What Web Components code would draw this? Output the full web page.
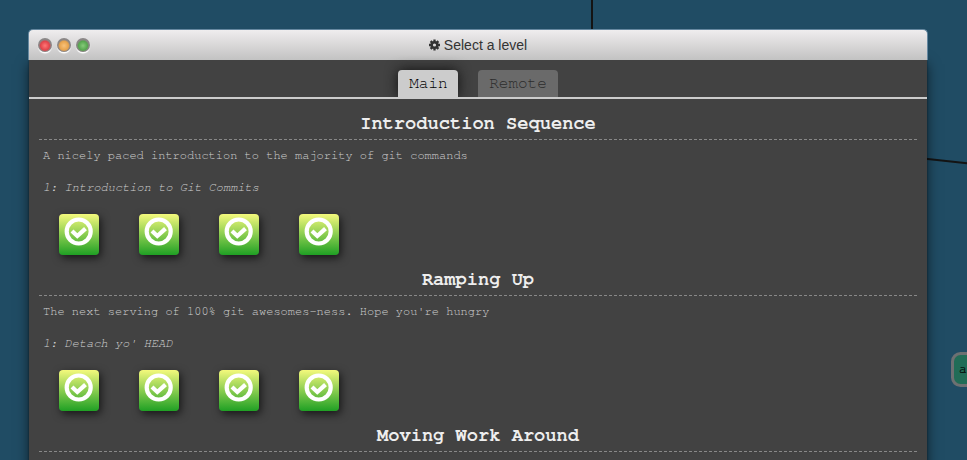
<!DOCTYPE html>
<html lang="en"><head><meta charset="utf-8"><title>Select a level</title>
<style>html,body{margin:0;height:100%;overflow:hidden;background:#204c64}html{--mono:"TeX Gyre Cursor","Liberation Mono",monospace}</style></head><body>
<git-desktop>
<commit-canvas slot="canvas"></commit-canvas>
<level-window caption="Select a level">
<tab-strip slot="tabs"><level-tab active>Main</level-tab><level-tab>Remote</level-tab></tab-strip>
<level-sequence heading="Introduction Sequence" about="A nicely paced introduction to the majority of git commands" level="1: Introduction to Git Commits"><level-icon></level-icon><level-icon></level-icon><level-icon></level-icon><level-icon></level-icon></level-sequence>
<level-sequence heading="Ramping Up" about="The next serving of 100% git awesomes-ness. Hope you're hungry" level="1: Detach yo' HEAD"><level-icon></level-icon><level-icon></level-icon><level-icon></level-icon><level-icon></level-icon></level-sequence>
<level-sequence heading="Moving Work Around"></level-sequence>
</level-window>
</git-desktop>
<script>
const define = (name, render) => customElements.define(name, class extends HTMLElement {
  connectedCallback() {
    if (!this.shadowRoot) this.attachShadow({mode: 'open'}).innerHTML = render(this);
  }
});

define('git-desktop', () => `<style>
:host{display:block;position:relative;width:967px;height:460px;overflow:hidden;background:#204c64}
main{position:relative;padding:29px 39px 0 28px}
</style><slot name="canvas"></slot><main><slot></slot></main>`);

define('commit-canvas', () => `<style>
:host{position:absolute;inset:0}svg{display:block}
</style><svg width="967" height="460"><path d="M592 0V40M900 156L967 163.300" stroke="#141414" stroke-width="2" fill="none"/>
<rect x="952.5" y="353.5" width="50" height="32" rx="8" fill="#216c57" stroke="#6d7072" stroke-width="3"/>
<text x="959" y="373" font-family="TeX Gyre Cursor, Liberation Mono, monospace" font-size="13" fill="#000" stroke="#000" stroke-width=".2">a</text></svg>`);

define('level-window', el => `<style>
:host{display:block;height:500px}
header{box-sizing:border-box;height:31px;border:1px solid #6688a0;border-bottom:0;border-radius:5px 5px 0 0;background:linear-gradient(#efedee,#c2c2c2);display:grid;grid-template-columns:1fr auto 1fr;align-items:center;position:relative}
.lights{display:flex;gap:5px;padding-left:9px}
.lights i{width:14px;height:14px;box-sizing:border-box;border-radius:50%;background:radial-gradient(circle at 50% 55%,var(--l) 0,var(--c) 4.500px,#8b8585 6px,#8b8888 7px);box-shadow:0 1.500px 1px #fff}
.cap{display:flex;align-items:center;gap:4px;font:14px/20px "Liberation Sans",sans-serif;color:#333}
.cap svg{display:block}
.body{height:460px;margin:0 1px;background:#424242;box-shadow:0 4px 12px rgba(0,0,0,.6),0 0 2px rgba(0,0,0,.4)}
</style><header><div class="lights"><i style="--c:#e0444a;--l:#ff7777"></i><i style="--c:#e7a34d;--l:#f9c27a"></i><i style="--c:#57a64f;--l:#86ca79"></i></div>
<div class="cap"><svg width="11" height="12" viewBox="0 0 24 24" fill="none" stroke="#333"><circle cx="12" cy="12" r="6.200" stroke-width="5.400"/><path d="M12 0V5M12 19V24M0 12H5M19 12H24M3.500 3.500L7 7M17 17L20.500 20.500M3.500 20.500L7 17M17 7L20.500 3.500" stroke-width="5"/></svg><span>${el.getAttribute('caption')}</span></div></header>
<div class="body"><slot name="tabs"></slot><slot></slot></div>`);

define('tab-strip', () => `<style>
:host{display:flex;box-sizing:border-box;height:39px;align-items:flex-end;justify-content:center;gap:20px;border-bottom:2px solid #ccc}
</style><slot></slot>`);

define('level-tab', () => `<style>
:host{display:block;box-sizing:border-box;height:27px;padding:3px 10.8px 0;border-radius:4px 4px 0 0;background:#6a6a6a;color:#2c2c2c;font:16px/20px var(--mono)}
:host([active]){background:#ccc;color:#000;box-shadow:0 0 13px #111;clip-path:inset(-15px -15px 0)}
</style><slot></slot>`);

define('level-sequence', el => `<style>
:host{display:block;padding:0 10px;height:156px;color:#d0d0d0;font:12px/20px var(--mono)}
h3{box-sizing:border-box;margin:0;height:40px;padding-top:13px;font-size:18.72px;line-height:20px;text-align:center;color:#eee}
.rule{display:block;height:1px;background:repeating-linear-gradient(90deg,#888 0 3px,transparent 3px 5px)}
p{margin:0;padding:5px 4px 0}
p+p{padding-top:12px;font-style:italic}
.icons{display:flex;gap:40px;padding:17px 20px 0}
</style><h3>${el.getAttribute('heading')}</h3><span class="rule"></span>
${el.hasAttribute('about') ? `<p>${el.getAttribute('about')}</p><p>${el.getAttribute('level')}</p>` : ''}<div class="icons"><slot></slot></div>`);

define('level-icon', () => `<style>
:host{display:block;width:40px;height:41px;border-radius:4px;background:linear-gradient(#f4f97c,#1fa024);box-shadow:2px 3px 9px rgba(0,0,0,.65)}
svg{display:block}
</style><svg width="40" height="41" fill="none" stroke="#fff"><circle cx="19.700" cy="17.500" r="12" stroke-width="4.200"/><path d="M13 17L18.300 22L26.500 14.600" stroke-width="4.200"/></svg>`);
</script></body></html>
